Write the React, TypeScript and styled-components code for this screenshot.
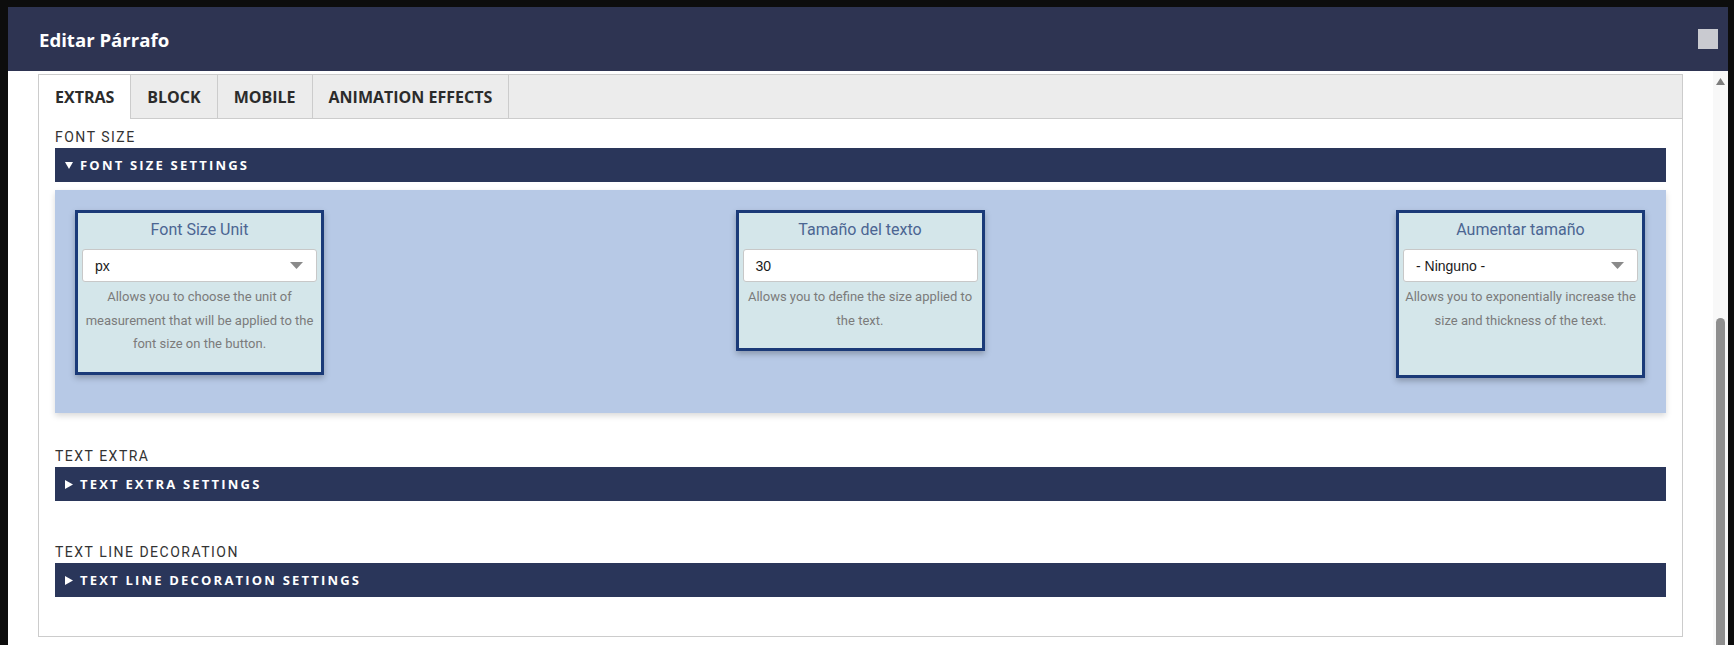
import React from 'react'
import styled, { createGlobalStyle } from 'styled-components'

const GlobalStyle = createGlobalStyle`
  html, body {
    margin: 0;
    padding: 0;
    background: #0d0d0d;
  }
  body {
    font-family: 'Open Sans', 'Liberation Sans', sans-serif;
  }
`

const Page = styled.div`
  height: 645px;
  box-sizing: border-box;
  padding: 7px 6px 0 8px;
  overflow: hidden;
  background: #0d0d0d;
`

const Dialog = styled.div`
  display: flex;
  flex-direction: column;
  height: 100%;
`

const Header = styled.header`
  flex-shrink: 0;
  height: 64px;
  background: #2e3452;
  display: flex;
  align-items: center;
  justify-content: space-between;
  padding: 0 10px 0 31px;
`

const Title = styled.h1`
  margin: 0;
  color: #fff;
  font-family: 'Open Sans', sans-serif;
  font-size: 18.6px;
  font-weight: 700;
`

const CloseBox = styled.div`
  width: 20px;
  height: 20px;
  background: #c9cad0;
`

const Body = styled.div`
  flex: 1;
  min-height: 0;
  display: flex;
  background: #fff;
`

const Content = styled.div`
  flex: 1;
  padding: 3px 30px 0 30px;
  overflow: hidden;
`

const ScrollTrack = styled.div`
  width: 15px;
  flex-shrink: 0;
  background: #f8f8f8;
  display: flex;
  flex-direction: column;
  align-items: center;
`

const ScrollArrow = styled.svg`
  margin-top: 7px;
`

const ScrollThumb = styled.div`
  margin-top: auto;
  width: 9px;
  height: 327px;
  background: #8f8f8f;
  border-radius: 5px 5px 0 0;
`

const TabPanel = styled.div`
  border: 1px solid #cccccc;
`

const TabBar = styled.div`
  display: flex;
  height: 43px;
  background: #ececec;
  border-bottom: 1px solid #cccccc;
`

const Tab = styled.div<{ $active?: boolean }>`
  display: flex;
  align-items: center;
  padding: 0 16px;
  border-right: 1px solid #cccccc;
  background: ${({ $active }) => ($active ? '#fff' : 'transparent')};
  margin-bottom: ${({ $active }) => ($active ? '-1px' : '0')};
  color: #2b2b2b;
  font-size: 16px;
  font-weight: 700;
  cursor: pointer;
`

const Sections = styled.div`
  padding: 9px 16px 0 16px;
`

const Section = styled.section`
  padding-bottom: 34px;
  &:last-child {
    padding-bottom: 31px;
  }
`

const SectionLabel = styled.div`
  font-family: Roboto, sans-serif;
  font-size: 14px;
  line-height: 18px;
  letter-spacing: 1.5px;
  color: #333;
  margin-bottom: 2px;
`

const Bar = styled.div`
  height: 34px;
  background: #2a365a;
  color: #fff;
  display: flex;
  align-items: center;
  gap: 7px;
  padding-left: 10px;
  margin-bottom: 8px;
  font-family: 'Open Sans', sans-serif;
  font-size: 13px;
  font-weight: 700;
  letter-spacing: 2.2px;
`

const SettingsPanel = styled.div`
  display: flex;
  justify-content: space-between;
  align-items: flex-start;
  padding: 20px 21px 35px 20px;
  background: #b7c9e6;
  box-shadow: 0 3px 6px rgba(0, 0, 0, 0.15);
`

const Card = styled.div<{ $minHeight?: number }>`
  width: 249px;
  box-sizing: border-box;
  min-height: ${({ $minHeight }) => ($minHeight ? `${$minHeight}px` : 'auto')};
  padding: 7px 4px 16px;
  border: 3px solid #1b3a78;
  background: #d4e6ea;
  box-shadow: 0 3px 6px rgba(0, 0, 0, 0.25);
  text-align: center;
`

const CardTitle = styled.div`
  font-family: Roboto, sans-serif;
  font-size: 16px;
  line-height: 20px;
  color: #4b6592;
  margin-bottom: 9px;
`

const Field = styled.div`
  height: 33px;
  box-sizing: border-box;
  display: flex;
  align-items: center;
  justify-content: space-between;
  padding: 0 13px 0 12px;
  background: #fff;
  border: 1px solid #c8c8c8;
  border-radius: 3px;
  font-family: 'Liberation Sans', Arial, sans-serif;
  font-size: 14px;
  color: #1a1a1a;
  text-align: left;
`

const Help = styled.div`
  margin-top: 3px;
  font-family: Roboto, sans-serif;
  font-size: 13px;
  line-height: 23.5px;
  color: #7b7b7b;
`

const HelpLine = styled.span`
  display: block;
  white-space: nowrap;
  margin: 0 -6px;
`

const Caret = ({ open }: { open: boolean }) =>
  open ? (
    <svg width="8" height="7" viewBox="0 0 8 7">
      <polygon points="0,0 8,0 4,7" fill="#fff" />
    </svg>
  ) : (
    <svg width="8" height="9" viewBox="0 0 8 9">
      <polygon points="0,0 8,4.5 0,9" fill="#fff" />
    </svg>
  )

const SelectArrow = () => (
  <svg width="13" height="7" viewBox="0 0 13 7">
    <polygon points="0,0 13,0 6.5,7" fill="#8a8a8a" />
  </svg>
)

type SettingCardProps = {
  title: string
  value: string
  select?: boolean
  help: string[]
  minHeight?: number
}

const SettingCard = ({ title, value, select, help, minHeight }: SettingCardProps) => (
  <Card $minHeight={minHeight}>
    <CardTitle>{title}</CardTitle>
    <Field>
      <span>{value}</span>
      {select && <SelectArrow />}
    </Field>
    <Help>
      {help.map((line) => (
        <HelpLine key={line}>{line}</HelpLine>
      ))}
    </Help>
  </Card>
)

const tabs = ['EXTRAS', 'BLOCK', 'MOBILE', 'ANIMATION EFFECTS']

const App = () => {
  return (
    <Page>
      <GlobalStyle />
      <Dialog>
        <Header>
          <Title>Editar Párrafo</Title>
          <CloseBox />
        </Header>
        <Body>
          <Content>
            <TabPanel>
              <TabBar>
                {tabs.map((t, i) => (
                  <Tab key={t} $active={i === 0}>
                    {t}
                  </Tab>
                ))}
              </TabBar>
              <Sections>
                <Section>
                  <SectionLabel>FONT SIZE</SectionLabel>
                  <Bar>
                    <Caret open />
                    FONT SIZE SETTINGS
                  </Bar>
                  <SettingsPanel>
                    <SettingCard
                      title="Font Size Unit"
                      value="px"
                      select
                      help={[
                        'Allows you to choose the unit of',
                        'measurement that will be applied to the',
                        'font size on the button.',
                      ]}
                    />
                    <SettingCard
                      title="Tamaño del texto"
                      value="30"
                      help={['Allows you to define the size applied to', 'the text.']}
                    />
                    <SettingCard
                      title="Aumentar tamaño"
                      value="- Ninguno -"
                      select
                      minHeight={168}
                      help={['Allows you to exponentially increase the', 'size and thickness of the text.']}
                    />
                  </SettingsPanel>
                </Section>
                <Section>
                  <SectionLabel>TEXT EXTRA</SectionLabel>
                  <Bar>
                    <Caret open={false} />
                    TEXT EXTRA SETTINGS
                  </Bar>
                </Section>
                <Section>
                  <SectionLabel>TEXT LINE DECORATION</SectionLabel>
                  <Bar>
                    <Caret open={false} />
                    TEXT LINE DECORATION SETTINGS
                  </Bar>
                </Section>
              </Sections>
            </TabPanel>
          </Content>
          <ScrollTrack>
            <ScrollArrow width="9" height="7" viewBox="0 0 9 7">
              <polygon points="4.5,0 9,7 0,7" fill="#7d7d7d" />
            </ScrollArrow>
            <ScrollThumb />
          </ScrollTrack>
        </Body>
      </Dialog>
    </Page>
  )
}

export default App
